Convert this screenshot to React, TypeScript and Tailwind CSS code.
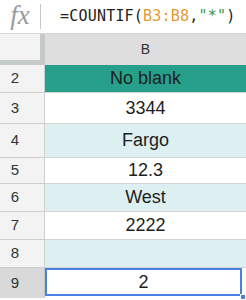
import React from 'react';

const rows = [
  { n: 2, value: 'No blank', h: 'h-[28px]', bg: 'bg-[#26a08b]' },
  { n: 3, value: '3344', h: 'h-[31px]', bg: 'bg-white' },
  { n: 4, value: 'Fargo', h: 'h-[34px]', bg: 'bg-[#ddeff0]' },
  { n: 5, value: '12.3', h: 'h-[26px]', bg: 'bg-white' },
  { n: 6, value: 'West', h: 'h-[28px]', bg: 'bg-[#ddeff0]' },
  { n: 7, value: '2222', h: 'h-[28px]', bg: 'bg-white' },
  { n: 8, value: '', h: 'h-[28px]', bg: 'bg-[#ddeff0]' },
];

export default function App() {
  return (
    <div className="w-[246px] h-[300px] overflow-hidden bg-white font-['Liberation_Sans',Arial,sans-serif]">
      {/* formula bar */}
      <div className="h-[34px] flex items-center border-b border-[#d4d4d4]">
        <div className="w-[45px] h-full flex items-center">
          <span className="w-[38px] pl-[2px] text-center font-['Liberation_Serif',serif] italic text-[27px] leading-none text-[#9a9a9a] -mt-[3px]">
            fx
          </span>
          <span className="ml-[2px] w-px h-[25px] bg-[#c4c4c4]" />
        </div>
        <div className="pl-[15px] font-['DejaVu_Sans_Mono',monospace] text-[15px] text-[#222] tracking-[0.2px]">
          =COUNTIF(<span className="text-[#e39a32]">B3:B8</span>,<span className="text-[#3f9a45]">"*"</span>)
        </div>
      </div>

      {/* column header */}
      <div className="h-[31px] flex">
        <div className="w-[45px] bg-[#f3f3f3] border-r-[5px] border-b-[5px] border-[#c5c9c9]" />
        <div className="flex-1 bg-[#dedede] flex items-center justify-center text-[14px] text-[#333]">B</div>
      </div>

      {rows.map((r) => (
        <div key={r.n} className={`${r.h} flex`}>
          <div className="w-[45px] bg-[#f3f3f3] border-r border-b border-[#cfcfcf] flex items-center">
            <span className="w-[30px] text-center text-[15px] text-[#333]">{r.n}</span>
          </div>
          <div className={`flex-1 ${r.bg} border-b border-[#d3d3d3] flex items-center justify-center text-[18px] text-[#1e1e1e]`}>
            {r.value}
          </div>
        </div>
      ))}

      {/* selected row */}
      <div className="h-[30px] flex">
        <div className="w-[45px] bg-[#d9d9d9] border-r border-[#c4c4c4] flex items-center">
          <span className="w-[30px] text-center text-[15px] text-[#333]">9</span>
        </div>
        <div className="relative flex-1 mr-[4px] mb-[2px] border-2 border-[#4a80e3] bg-white flex items-center justify-center text-[18px] text-[#1e1e1e]">
          2
          <span className="absolute -right-[6px] -bottom-[6px] w-[6px] h-[6px] bg-[#4a80e3] border border-white" />
        </div>
      </div>
    </div>
  );
}
